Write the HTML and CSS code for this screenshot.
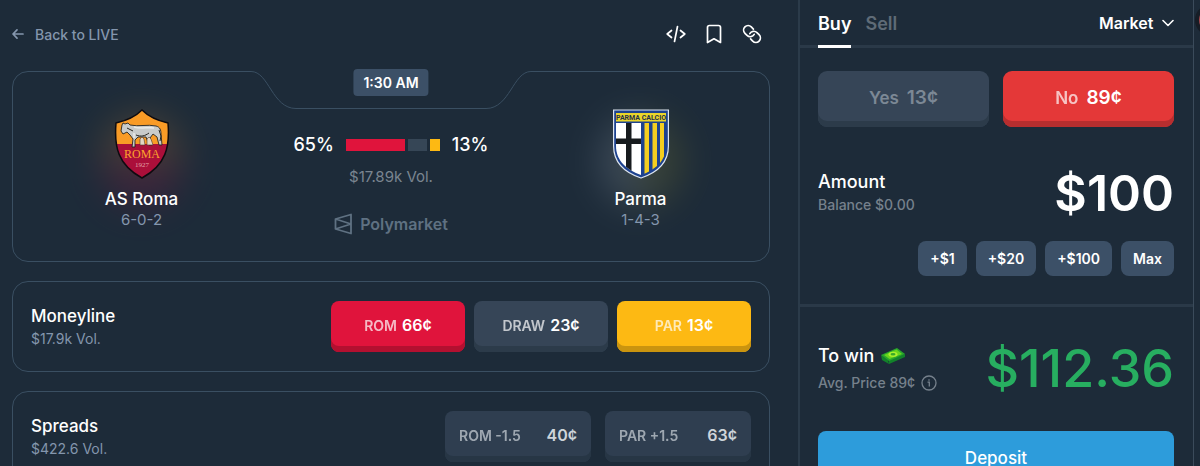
FILE: index.html
```html
<!DOCTYPE html>
<html lang="en">

<head>
    <meta charset="UTF-8">
    <meta name="viewport" content="width=device-width, initial-scale=1.0">
    <title>AS Roma vs Parma</title>
    <link rel="stylesheet" href="styles.css">
</head>

<body>
    <main class="event">
        <header class="topbar">
            <a class="back" href="#">
                <svg width="12" height="12" viewBox="0 0 12 12" fill="none" stroke="currentColor" stroke-width="1.7" stroke-linecap="round" stroke-linejoin="round"><path d="M11 6H1.2M5 1.8 1 6l4 4.2"/></svg>
                Back to LIVE
            </a>
            <div class="actions">
                <button class="icon-button" aria-label="Embed">
                    <svg width="20" height="20" viewBox="0 0 20 20"><path d="M5.500 6.500 1.200 10l4.300 3.500M14.500 6.500l4.300 3.500-4.300 3.500M11.500 2.500 8.500 17.500"/></svg>
                </button>
                <button class="icon-button" aria-label="Bookmark">
                    <svg width="20" height="20" viewBox="0 0 20 20"><path d="M3.500 18.500V3.500a2 2 0 0 1 2-2h9a2 2 0 0 1 2 2v15L10 14.800z"/></svg>
                </button>
                <button class="icon-button" aria-label="Copy link">
                    <svg width="20" height="20" viewBox="0 0 20 20"><g transform="rotate(45 10 10)"><path d="M7.500 5.500h-3a4.500 4.500 0 0 0 0 9h3a4.500 4.500 0 0 0 4.300-5.800"/><path d="M12.500 14.500h3a4.500 4.500 0 0 0 0-9h-3a4.500 4.500 0 0 0-4.300 5.800"/></g></svg>
                </button>
            </div>
        </header>

        <section class="card match">
            <svg class="notch" width="284" height="38" viewBox="0 0 284 38">
                <path class="notch-fill" d="M0 0H284V1C262 1 266 37 238 37H46C18 37 22 1 0 1z"/>
                <path class="notch-line" d="M0 .5H2C20 .5 23 37.500 47 37.500H237C261 37.500 264 .5 282 .5h2"/>
            </svg>
            <time class="kickoff">1:30 AM</time>

            <div class="team roma">
                <svg class="crest" width="56" height="70" viewBox="0 0 56 70">
                    <clipPath id="roma-shield"><path d="M28 1C21 8 11 12 2 14 0 38 4 56 28 69 52 56 56 38 54 14 45 12 35 8 28 1z"/></clipPath>
                    <g clip-path="url(#roma-shield)">
                        <path fill="#f99b26" d="M0 0h56v35H0z"/>
                        <path fill="#ab0f3a" d="M0 35h56v35H0z"/>
                    </g>
                    <path fill="none" stroke="#0d0b10" stroke-width="1.500" d="M28 1C21 8 11 12 2 14 0 38 4 56 28 69 52 56 56 38 54 14 45 12 35 8 28 1z"/>
                    <path fill="#c9cbca" stroke="#27251f" stroke-width=".9" stroke-linejoin="round" d="M8 16l1-2 2 1 3-1 2 2c8 2 18-1 26 1 4 1 5 4 5 8l1 11h-3l-2-8-4-3-3 4 2 7h-3l-3-8H24l-3 3v7h-3l1-8-3-4-3-3-4 2-2-3z"/>
                    <path fill="none" stroke="#e9ebea" stroke-width="1.500" d="M20 18c7 2 14 0 20 1M20 24v5"/>
                    <path fill="none" stroke="#27251f" d="M13 19l6 3M22 26c5 2 9 1 13-2M45 21l2 6-1 5"/>
                    <path fill="#e2d6c5" stroke="#4c382d" stroke-width=".6" d="M26 30l2-2 2 2 1 6h-5zM33 30l2-2 2 2 2 6h-6z"/>
                    <text class="roma-word" x="28" y="49" text-anchor="middle">ROMA</text>
                    <text class="roma-year" x="28" y="58" text-anchor="middle">1927</text>
                </svg>
                <h2 class="team-name">AS Roma</h2>
                <p class="record">6-0-2</p>
            </div>

            <div class="odds">
                <div class="odds-row">
                    <span>65%</span>
                    <div class="odds-bar">
                        <i class="odds-home"></i>
                        <i class="odds-draw"></i>
                        <i class="odds-away"></i>
                    </div>
                    <span>13%</span>
                </div>
                <p class="match-volume">$17.89k Vol.</p>
                <div class="brand">
                    <svg width="18" height="22" viewBox="0 0 18 22" fill="none" stroke="currentColor" stroke-width="1.800" stroke-linejoin="round"><path d="M17 1.500 1.500 6v10L17 20.500zM1.500 6 17 11 1.500 16"/></svg>
                    Polymarket
                </div>
            </div>

            <div class="team parma">
                <svg class="crest" width="56" height="70" viewBox="0 0 56 70">
                    <path fill="#1d428f" stroke="#dde5f0" stroke-width="1.200" d="M.6 1h54.800v36C55.400 54 43 64 28 69 13 64 .6 54 .6 37z"/>
                    <path fill="#ead52a" d="M3 4h50v8.500H3z"/>
                    <clipPath id="parma-shield"><path d="M3 14h50v23C53 52 42 61 28 66 14 61 3 52 3 37z"/></clipPath>
                    <g clip-path="url(#parma-shield)">
                        <path fill="#fff" d="M3 14h25v53H3z"/>
                        <path fill="#171b1e" d="M13 14h5.500v53H13zM3 29.500h25V35H3z"/>
                        <path fill="#f4ce20" d="M31.500 14h4.500v53h-4.500zM39.500 14H44v53h-4.500zM47 14h4v53h-4z"/>
                    </g>
                    <text class="parma-word" x="28" y="11" text-anchor="middle">PARMA CALCIO</text>
                </svg>
                <h2 class="team-name">Parma</h2>
                <p class="record">1-4-3</p>
            </div>
        </section>

        <section class="card market">
            <div>
                <h3 class="market-title">Moneyline</h3>
                <p class="market-volume">$17.9k Vol.</p>
            </div>
            <div class="market-buttons">
                <button class="price-button rom"><span>ROM</span> <b>66¢</b></button>
                <button class="price-button"><span>DRAW</span> <b>23¢</b></button>
                <button class="price-button par"><span>PAR</span> <b>13¢</b></button>
            </div>
        </section>

        <section class="card market">
            <div>
                <h3 class="market-title">Spreads</h3>
                <p class="market-volume">$422.6 Vol.</p>
            </div>
            <div class="market-buttons spreads">
                <button class="price-button spread"><span>ROM -1.5</span> <b>40¢</b></button>
                <button class="price-button spread"><span>PAR +1.5</span> <b>63¢</b></button>
            </div>
        </section>
    </main>

    <aside class="trade">
        <div class="trade-head">
            <div class="tabs">
                <button class="tab active">Buy</button>
                <button class="tab">Sell</button>
            </div>
            <div class="order-type">
                <select aria-label="Order type">
                    <option>Market</option>
                    <option>Limit</option>
                </select>
                <svg width="12" height="8" viewBox="0 0 12 8" fill="none" stroke="currentColor" stroke-width="1.600" stroke-linecap="round" stroke-linejoin="round"><path d="M1 1.500l5 5 5-5"/></svg>
            </div>
        </div>

        <div class="trade-body">
            <div class="outcomes">
                <button class="outcome"><span>Yes</span> <b>13¢</b></button>
                <button class="outcome selected"><span>No</span> <b>89¢</b></button>
            </div>
            <div class="figure-row">
                <div>
                    <label class="figure-label" for="amount">Amount</label>
                    <p class="figure-note">Balance $0.00</p>
                </div>
                <input class="amount" id="amount" type="text" value="$100">
            </div>
            <div class="chips">
                <button class="chip">+$1</button>
                <button class="chip">+$20</button>
                <button class="chip">+$100</button>
                <button class="chip">Max</button>
            </div>
        </div>

        <div class="trade-body payout">
            <div class="figure-row">
                <div>
                    <p class="figure-label">To win
                        <svg width="24" height="18" viewBox="0 0 24 18">
                            <path fill="#12822a" d="M0 8l7 5 1 4-7-4zM8 13l16-6v3L8 17z"/>
                            <path fill="#28a72c" d="M0 8 16 1l8 6-16 7z"/>
                            <path fill="#68d51e" d="M3 8l12.500-5.500L21 7 8.500 12z"/>
                            <ellipse cx="12" cy="7.300" rx="4.500" ry="2.600" fill="#a8f02c"/>
                            <ellipse cx="12" cy="7.300" rx="2.500" ry="1.300" fill="#36a82a"/>
                        </svg>
                    </p>
                    <p class="figure-note">Avg. Price 89¢
                        <svg width="16" height="16" viewBox="0 0 16 16" fill="none" stroke="currentColor" stroke-width="1.300"><circle cx="8" cy="8" r="7"/><path d="M6.500 7.200H8.300V11.500M8 4.300v1.400"/></svg>
                    </p>
                </div>
                <output class="win">$112.36</output>
            </div>
            <button class="deposit">Deposit</button>
        </div>
    </aside>

    <div class="bubble"></div>
</body>

</html>
```
FILE: styles.css
```css
* {
    box-sizing: border-box;
}

body {
    position: relative;
    display: grid;
    grid-template-columns: 1fr 396px;
    height: 100vh;
    margin: 0;
    padding-right: 6px;
    overflow: hidden;
    background-color: #1d2b39;
    color: #fff;
    font-family: Inter, "Liberation Sans", sans-serif;
}

h2, h3, p {
    margin: 0;
}

button, input, select {
    border: none;
    padding: 0;
    background: none;
    color: inherit;
    font-family: inherit;
}

button {
    cursor: pointer;
}

.event {
    display: flex;
    flex-direction: column;
    gap: 19px;
    padding: 0 28px 0 12px;
}

.topbar {
    display: flex;
    justify-content: space-between;
    align-items: center;
    height: 52px;
    padding: 16px 8px 0 0;
}

.back {
    display: flex;
    align-items: center;
    gap: 11px;
    color: #8496ad;
    font-size: 14px;
    font-weight: 500;
    text-decoration: none;
}

.actions {
    display: flex;
    gap: 18px;
}

.icon-button {
    display: flex;
}

.icon-button svg {
    fill: none;
    stroke: #fff;
    stroke-width: 1.7;
    stroke-linecap: round;
    stroke-linejoin: round;
}

.card {
    flex: none;
    border: 1px solid #3a4f62;
    border-radius: 16px;
}

.match {
    position: relative;
    display: grid;
    grid-template-columns: 1fr 242px 1fr;
    height: 191px;
    padding-top: 37px;
}

.notch {
    position: absolute;
    top: -1px;
    left: calc(50% - 142px);
}

.notch-fill {
    fill: #1d2b39;
}

.notch-line {
    fill: none;
    stroke: #3a4f62;
}

.kickoff {
    position: absolute;
    top: -3px;
    left: 50%;
    transform: translateX(-50%);
    padding: 0 10px;
    border-radius: 4px;
    background-color: #3c5067;
    font-size: 14px;
    font-weight: 600;
    line-height: 27px;
    white-space: nowrap;
}

.team {
    position: relative;
    display: flex;
    flex-direction: column;
    align-items: center;
}

/* soft glow in the club colours behind the crest */
.team::before {
    content: "";
    position: absolute;
    top: 6px;
    width: 84px;
    height: 92px;
    border-radius: 50%;
    filter: blur(18px);
    opacity: 0.28;
}

.roma::before {
    background: linear-gradient(#b87a30 50%, #8c1440 50%);
}

.parma::before {
    background: linear-gradient(90deg, #8d98a5 50%, #7c7a2c 50%);
}

.crest {
    position: relative;
}

.roma-word {
    fill: #fba32c;
    font: 12px "Liberation Serif", serif;
}

.roma-year {
    fill: #e4a3a9;
    font: 7px "Liberation Serif", serif;
}

.parma-word {
    fill: #25304a;
    font: bold 7px "Roboto", sans-serif;
}

.team-name {
    position: relative;
    margin-top: 8px;
    font-size: 17px;
    font-weight: 500;
    line-height: 24px;
}

.record {
    position: relative;
    color: #8496ad;
    font-size: 15px;
    line-height: 18px;
}

.odds {
    display: flex;
    flex-direction: column;
    align-items: center;
    padding-top: 24px;
}

.odds-row {
    display: flex;
    align-items: center;
    gap: 12px;
    font-size: 18px;
    font-weight: 500;
    line-height: 24px;
}

.odds-bar {
    display: flex;
    gap: 3px;
    width: 94px;
    height: 12px;
}

.odds-home {
    flex: 65;
    background-color: #e0143c;
}

.odds-draw {
    flex: 21;
    background-color: #364656;
}

.odds-away {
    flex: 11;
    background-color: #fdb913;
}

.match-volume {
    margin-top: 9px;
    color: #7a8590;
    font-size: 15px;
    line-height: 22px;
}

.brand {
    display: flex;
    align-items: center;
    gap: 8px;
    margin-top: 24px;
    color: #5f7182;
    font-size: 16px;
    font-weight: 600;
    line-height: 24px;
}

.market {
    display: flex;
    justify-content: space-between;
    align-items: center;
    height: 91px;
    padding: 0 18px;
}

.market-title {
    font-size: 17px;
    font-weight: 500;
    line-height: 24px;
}

.market-volume {
    color: #8496ad;
    font-size: 14px;
    line-height: 22px;
}

.market-buttons {
    display: flex;
    gap: 9px;
}

.market-buttons.spreads {
    gap: 14px;
}

.price-button {
    display: flex;
    justify-content: center;
    align-items: center;
    gap: 5px;
    width: 134px;
    height: 51px;
    padding-bottom: 3px;
    border-radius: 8px;
    background-color: #364557;
    box-shadow: inset 0 -6px #2c3b4a;
    font-size: 16px;
}

.price-button span {
    opacity: 0.7;
    font-size: 14px;
    font-weight: 600;
}

.price-button b {
    font-weight: 600;
}

.price-button.rom {
    background-color: #e0143c;
    box-shadow: inset 0 -6px #b31030;
}

.price-button.par {
    background-color: #fdb913;
    box-shadow: inset 0 -6px #ca940f;
}

.price-button.spread {
    justify-content: space-between;
    width: 146px;
    padding: 0 14px 3px;
    background-color: #2f3e50;
    box-shadow: inset 0 -6px #273645;
    color: #ced4da;
}

.trade {
    border-left: 2px solid #2b3b4a;
    border-right: 1px solid #3b4b5b;
}

.trade-head {
    display: flex;
    justify-content: space-between;
    height: 48px;
    padding: 0 19px 0 18px;
    border-bottom: 3px solid #2a3948;
}

.tabs {
    display: flex;
    gap: 14px;
}

.tab {
    height: 48px;
    padding-top: 2px;
    border-bottom: 3px solid transparent;
    color: #5f6b77;
    font-size: 18px;
    font-weight: 600;
}

.tab.active {
    border-bottom-color: #fff;
    color: #fff;
}

.order-type {
    display: flex;
    align-items: center;
    gap: 8px;
}

.order-type select {
    appearance: none;
    font-size: 16px;
    font-weight: 600;
}

.trade-body {
    padding: 23px 19px 28px 18px;
}

.outcomes {
    display: grid;
    grid-template-columns: 1fr 1fr;
    gap: 14px;
}

.outcome {
    display: flex;
    justify-content: center;
    align-items: center;
    gap: 8px;
    height: 56px;
    padding-bottom: 3px;
    border-radius: 9px;
    background-color: #364557;
    box-shadow: inset 0 -6px #2c3b4a;
    color: #7c8895;
    font-size: 19px;
}

.outcome span {
    font-size: 17px;
    font-weight: 600;
}

.outcome b {
    font-weight: 600;
}

.outcome.selected {
    background-color: #e43838;
    box-shadow: inset 0 -6px #b72e2f;
    color: #fff;
}

.outcome.selected span {
    opacity: 0.7;
}

.figure-row {
    display: flex;
    justify-content: space-between;
    align-items: center;
}

.outcomes + .figure-row {
    margin-top: 32px;
}

.figure-label {
    display: flex;
    align-items: center;
    gap: 7px;
    font-size: 18px;
    font-weight: 500;
    line-height: 24px;
}

.figure-note {
    display: flex;
    align-items: center;
    gap: 6px;
    color: #76818c;
    font-size: 14px;
    font-weight: 500;
    line-height: 22px;
}

.payout .figure-note {
    margin-top: 4px;
}

.amount {
    width: 200px;
    height: 68px;
    font-size: 50px;
    font-weight: 600;
    text-align: right;
}

.chips {
    display: flex;
    justify-content: flex-end;
    gap: 9px;
    margin-top: 14px;
}

.chip {
    height: 35px;
    padding: 0 12px;
    border-radius: 8px;
    background-color: #3c5067;
    font-size: 14px;
    font-weight: 600;
}

.payout {
    padding-top: 28px;
    border-top: 3px solid #2a3948;
}

.win {
    color: #27ae60;
    font-size: 52px;
    font-weight: 500;
    line-height: 68px;
}

.deposit {
    width: 100%;
    height: 54px;
    margin-top: 28px;
    border-radius: 8px;
    background-color: #2d9cdb;
    font-size: 17px;
    font-weight: 500;
}

/* floating button that peeks in from the window edge */
.bubble {
    position: absolute;
    top: 4px;
    right: -27px;
    width: 32px;
    height: 32px;
    border: 4px solid #171d26;
    border-radius: 50%;
    background-color: #a8474c;
}
```
